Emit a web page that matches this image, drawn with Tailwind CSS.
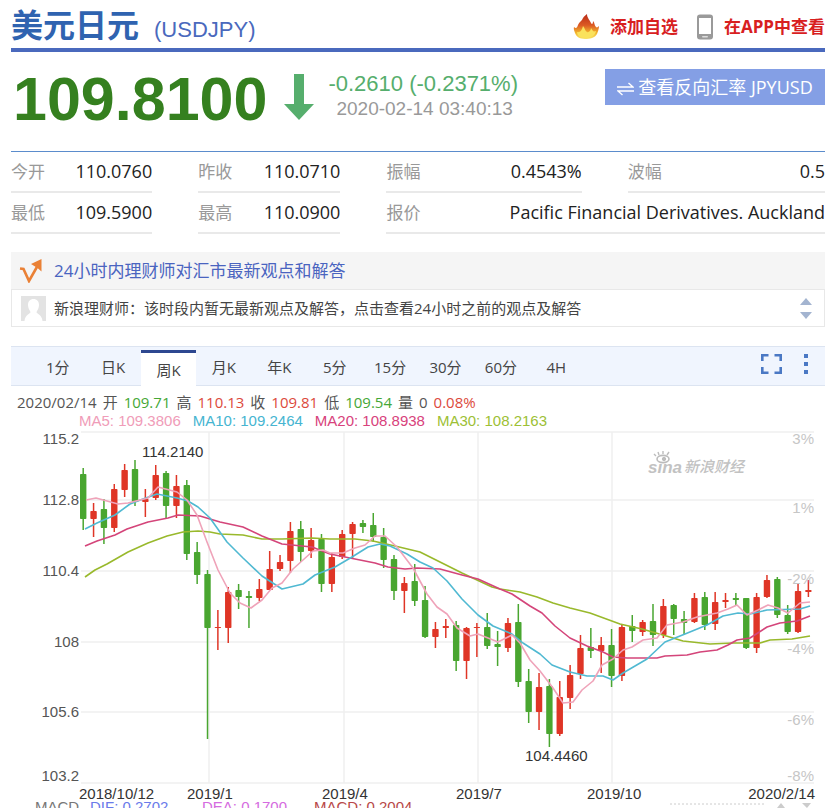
<!DOCTYPE html>
<html lang="zh-CN">

<head>
    <meta charset="UTF-8">
    <meta name="viewport" content="width=device-width, initial-scale=1.0">
    <title>美元日元 (USDJPY)</title>
    <script src="https://cdn.jsdelivr.net/npm/@tailwindcss/browser@4"></script>
</head>

<body class="bg-white font-['Open_Sans','Noto_Sans_CJK_SC',sans-serif] text-[#222]">
    <div class="pl-[11px] pr-[15px] overflow-hidden">

        <!-- title bar -->
        <header class="flex items-center justify-between h-[52px] border-b-4 border-[#4a69bd]">
            <h1 class="flex items-baseline gap-[15px] pt-[5px] text-[32px] leading-[43px] font-bold text-[#2f63b0]">美元日元
                <span class="font-['Liberation_Sans',sans-serif] text-[22px] font-normal text-[#4a69bd]">(USDJPY)</span>
            </h1>
            <nav class="flex items-center gap-[18px] pt-[6px] text-[17px] leading-[24px] font-bold text-[#d8201f]">
                <a href="#" class="flex items-center gap-[10px]">
                    <svg class="w-[27px] h-[26px]" viewBox="0 0 27 26">
                        <defs>
                            <linearGradient id="fire" x1="0" y1="0" x2="0" y2="1">
                                <stop offset="0" stop-color="#b92a18" />
                                <stop offset=".45" stop-color="#dc5a24" />
                                <stop offset=".75" stop-color="#f3b52c" />
                                <stop offset="1" stop-color="#f9e46a" />
                            </linearGradient>
                        </defs>
                        <path fill="url(#fire)"
                            d="M12 25C6 25 3 22 2 19C1 16 .5 15 1 13C3 15 4 14 5 11C6 8 9 7 10 4C11 2 13 1 14 0C14 4 17 6 18 9C19 11 20 10 20 7C22 9 21 11 23 13C24 14 25 13 26 12C26 15 25 17 24 20C22 24 17 25 12 25Z" />
                        <path fill="#fae25c"
                            d="M12 24C7 24 4 21 4 18C7 19 9 16 10 12C12 14 12 17 14 18C16 19 18 16 18 14C20 17 20 18 23 17C22 22 18 24 12 24Z" />
                    </svg>
                    添加自选
                </a>
                <a href="#" class="flex items-center gap-[10px]">
                    <svg class="w-[18px] h-[26px]" viewBox="0 0 18 26">
                        <rect x="1" y=".5" width="16" height="25" rx="3" fill="#9a9a9a" />
                        <rect x="3" y="4" width="12" height="16" fill="#fff" />
                        <rect x="6" y="22" width="6" height="1.6" rx=".8" fill="#ddd" />
                    </svg>
                    在APP中查看
                </a>
            </nav>
        </header>

        <!-- price -->
        <section class="flex items-start h-[99px] font-['Liberation_Sans',sans-serif]">
            <div class="pt-[12px] pl-[2px] text-[61px] leading-[70px] font-bold text-[#35801f]">109.8100</div>
            <svg class="w-[30px] h-[46px] mt-[22px] ml-[17px]" viewBox="0 0 30 46">
                <path fill="#56ae6d" d="M10 0H20V30H30L15 46L0 30H10Z" />
            </svg>
            <div class="pt-[19px] ml-[14px]">
                <div class="text-[22px] leading-[26px] text-[#56ae6d]">-0.2610 (-0.2371%)</div>
                <div class="pl-[8px] text-[19px] leading-[24px] text-[#999]">2020-02-14 03:40:13</div>
            </div>
            <button
                class="flex items-center justify-center gap-1 ml-auto mt-[17px] w-[220px] h-[36px] bg-[#849fe5] text-[18px] text-white font-['Open_Sans','Noto_Sans_CJK_SC',sans-serif] whitespace-nowrap">
                <svg class="w-[17px] h-[14px] mt-1" viewBox="0 0 17 14" fill="none" stroke="#fff" stroke-width="1.4">
                    <path d="M0 5H16L11.500 1M17 9H1L5.500 13" />
                </svg>
                查看反向汇率 JPYUSD
            </button>
        </section>

        <!-- quote details -->
        <dl
            class="grid grid-cols-[141fr_142fr_195fr_197fr] gap-x-[46px] border-t border-[#5b8ccc] [&_dt]:text-[17px] [&_dt]:text-[#999] [&_dd]:text-[18px] [&>div]:flex [&>div]:items-center [&>div]:justify-between [&>div]:h-[41px] [&>div]:border-b-2 [&>div]:border-[#e9e9e9] whitespace-nowrap">
            <div><dt>今开</dt><dd>110.0760</dd></div>
            <div><dt>昨收</dt><dd>110.0710</dd></div>
            <div><dt>振幅</dt><dd>0.4543%</dd></div>
            <div><dt>波幅</dt><dd>0.5</dd></div>
            <div><dt>最低</dt><dd>109.5900</dd></div>
            <div><dt>最高</dt><dd>110.0900</dd></div>
            <div class="col-span-2"><dt>报价</dt><dd>Pacific Financial Derivatives. Auckland</dd></div>
        </dl>

        <!-- adviser -->
        <section class="mt-[18px]">
            <h2 class="flex items-center gap-[11px] h-[37px] pl-[8px] bg-[#f5f5f5] text-[17px] text-[#4a64c0]">
                <svg class="w-[24px] h-[24px]" viewBox="0 0 24 24" fill="none">
                    <path stroke="#ea8136" stroke-width="2.6" d="M1 9.500L4.500 10L10 22L18.500 7" />
                    <path fill="#ea8136" d="M12 5L22.500 0V12.500L18.500 9Z" />
                </svg>
                <a href="#">24小时内理财师对汇市最新观点和解答</a>
            </h2>
            <div class="flex items-center gap-[8px] h-[38px] pl-[9px] pr-[12px] border border-[#e8e8e8] text-[15px] text-[#444]">
                <svg class="w-[25px] h-[25px]" viewBox="0 0 25 25">
                    <rect width="25" height="25" fill="#e3e3e3" />
                    <path fill="#fff"
                        d="M12.500 3C16 3 18 5.500 18 9C18 12 16.500 14 15.500 16C15.500 18 21 18.500 21.500 25H3.500C4 18.500 9.500 18 9.500 16C8.500 14 7 12 7 9C7 5.500 9 3 12.500 3Z" />
                </svg>
                <a href="#">新浪理财师：该时段内暂无最新观点及解答，点击查看24小时之前的观点及解答</a>
                <div class="flex flex-col gap-[7px] ml-auto">
                    <button aria-label="上一条"><svg class="block w-[12px] h-[7px]" viewBox="0 0 12 7"><path fill="#a3b4d0" d="M0 7L6 0L12 7Z" /></svg></button>
                    <button aria-label="下一条"><svg class="block w-[12px] h-[7px]" viewBox="0 0 12 7"><path fill="#a3b4d0" d="M0 0L6 7L12 0Z" /></svg></button>
                </div>
            </div>
        </section>

        <!-- period tabs -->
        <div class="flex mt-[19px] h-[40px] pl-[19px] bg-[#f0f5fe] border-y border-[#dce4f1] text-[15px] text-[#444]">
            <div class="grid grid-cols-10 w-[554px] [&>button]:pt-[2px]">
                <button>1分</button>
                <button>日K</button>
                <button class="mt-[3px] h-[36px] bg-white border-t-3 border-[#2d4790]">周K</button>
                <button>月K</button>
                <button>年K</button>
                <button>5分</button>
                <button>15分</button>
                <button>30分</button>
                <button>60分</button>
                <button>4H</button>
            </div>
            <div class="flex gap-[22px] ml-auto pr-[17px] pt-[7px]">
                <button class="self-start" aria-label="全屏">
                    <svg class="block w-[21px] h-[20px]" viewBox="0 0 21 20" fill="none" stroke="#4a78c4" stroke-width="2.6">
                        <path d="M1.300 7V1.300H7.500M13.500 1.300H19.700V7M19.700 13V18.700H13.500M7.500 18.700H1.300V13" />
                    </svg>
                </button>
                <button class="self-start" aria-label="更多">
                    <svg class="block w-[4px] h-[20px]" viewBox="0 0 4 20" fill="#4a78c4">
                        <path d="M0 0H4V4H0ZM0 8H4V12H0ZM0 16H4V20H0Z" />
                    </svg>
                </button>
            </div>
        </div>

        <div class="flex gap-[6px] pt-[6px] pl-[6px] text-[15px] leading-[20px] text-[#555] whitespace-nowrap">
            <span>2020/02/14</span>
            <span>开</span><span class="text-[#45a736]">109.71</span>
            <span>高</span><span class="text-[#dc4a3c]">110.13</span>
            <span>收</span><span class="text-[#dc4a3c]">109.81</span>
            <span>低</span><span class="text-[#45a736]">109.54</span>
            <span>量</span><span>0</span><span class="text-[#dc4a3c]">0.08%</span>
        </div>
        <div class="flex gap-[12px] pl-[68px] h-[18px] font-['Liberation_Sans',sans-serif] text-[15px] leading-[18px] whitespace-nowrap">
            <span class="text-[#f09cb8]">MA5: 109.3806</span>
            <span class="text-[#46b5d1]">MA10: 109.2464</span>
            <span class="text-[#d8427c]">MA20: 108.8938</span>
            <span class="text-[#9dbf35]">MA30: 108.2163</span>
        </div>

        <svg id="chart" class="block w-full font-['Liberation_Sans',sans-serif] text-[15px]" viewBox="11 430 814 378">
            <g id="grid" stroke="#efefef" stroke-width="1.5"></g>
            <g fill="#c2c2c2">
                <text x="648" y="473" class="text-[17px] font-bold italic">sina</text>
                <text x="684" y="472" class="text-[15px] font-medium italic font-['Noto_Sans_CJK_SC',sans-serif]">新浪财经</text>
                <g fill="none" stroke="#bcbcbc">
                    <ellipse cx="663" cy="459" rx="6" ry="3.6" fill="#fff" stroke-width="1.6" />
                    <circle cx="664" cy="459" r="1.7" fill="#bcbcbc" />
                    <path d="M656 456L654 454M659 455L658 452M663 454V451M667 455L669 452" stroke-width="1.4" />
                </g>
            </g>
            <g id="candles"></g>
            <g id="averages" fill="none" stroke-width="1.6" stroke-linejoin="round"></g>
            <g fill="#555" text-anchor="end">
                <text x="79" y="444">115.2</text>
                <text x="79" y="505">112.8</text>
                <text x="79" y="576">110.4</text>
                <text x="79" y="647">108</text>
                <text x="79" y="717">105.6</text>
                <text x="79" y="781">103.2</text>
            </g>
            <g fill="#c6c6c6" text-anchor="end">
                <text x="814" y="444">3%</text>
                <text x="814" y="513">1%</text>
                <text x="814" y="584">-2%</text>
                <text x="814" y="654">-4%</text>
                <text x="814" y="725">-6%</text>
                <text x="814" y="781">-8%</text>
            </g>
            <g fill="#333">
                <text x="142" y="457">114.2140</text>
                <text x="525" y="761">104.4460</text>
                <text x="79" y="799">2018/10/12</text>
                <text x="187" y="799">2019/1</text>
                <text x="322" y="799">2019/4</text>
                <text x="456" y="799">2019/7</text>
                <text x="587" y="799">2019/10</text>
                <text x="815" y="799" text-anchor="end">2020/2/14</text>
            </g>
            <text x="35" y="812" fill="#777">MACD</text>
            <text x="90" y="812" fill="#6a7bea">DIF: 0.2702</text>
            <text x="202" y="812" fill="#d56be0">DEA: 0.1700</text>
            <text x="314" y="812" fill="#b84848">MACD: 0.2004</text>
            <path d="M670 804H766" stroke="#ccc" stroke-dasharray="2 2" />
            <path d="M777 808L781 803L785 808ZM802 803H811L807 808Z" fill="#ccc" />
        </svg>
    </div>

    <script>
        // high, body top, body bottom, low, 1 = up (red) / 0 = down (green)
        const candles = [
            [468, 474, 519, 530, 0], [503, 511, 519, 537, 1], [499, 509, 528, 544, 0], [484, 489, 528, 532, 1],
            [464, 470, 490, 497, 1], [460, 469, 502, 506, 0], [489, 499, 502, 517, 1], [465, 475, 498, 500, 1],
            [471, 473, 506, 518, 0], [475, 486, 506, 518, 1], [480, 485, 554, 560, 0], [542, 552, 575, 584, 0],
            [570, 574, 628, 739, 0], [610, 627, 628, 650, 1], [587, 592, 628, 643, 1], [584, 590, 597, 609, 0],
            [591, 596, 598, 628, 0], [579, 589, 598, 601, 1], [551, 569, 590, 590, 1], [555, 562, 569, 571, 1],
            [522, 531, 561, 573, 1], [521, 529, 552, 562, 0], [528, 540, 551, 558, 1], [534, 539, 584, 592, 0],
            [553, 557, 584, 592, 1], [530, 534, 557, 559, 1], [522, 524, 534, 558, 1], [520, 523, 527, 533, 0],
            [513, 525, 537, 542, 0], [528, 537, 560, 568, 0], [555, 559, 591, 600, 0], [577, 583, 591, 613, 1],
            [564, 581, 601, 606, 0], [586, 600, 637, 638, 0], [622, 629, 637, 648, 1], [619, 626, 628, 638, 1],
            [621, 625, 661, 671, 0], [627, 628, 661, 679, 1], [623, 627, 628, 657, 1], [613, 627, 646, 649, 0],
            [631, 644, 647, 666, 0], [618, 623, 648, 652, 1], [604, 622, 682, 687, 0], [669, 681, 712, 723, 0],
            [673, 687, 712, 730, 1], [679, 686, 734, 747, 0], [681, 697, 734, 736, 1], [665, 675, 698, 709, 1],
            [635, 648, 674, 679, 1], [628, 647, 651, 658, 0], [637, 645, 651, 673, 1], [629, 645, 676, 687, 0],
            [625, 627, 676, 681, 1], [615, 626, 631, 642, 0], [620, 622, 632, 636, 1], [604, 621, 635, 646, 0],
            [599, 606, 635, 638, 1], [604, 605, 619, 635, 0], [611, 619, 623, 634, 0], [593, 598, 622, 623, 1],
            [592, 597, 625, 630, 0], [592, 602, 624, 630, 1], [593, 600, 602, 608, 1], [593, 598, 600, 605, 0],
            [598, 598, 648, 649, 0], [593, 597, 648, 653, 1], [575, 580, 597, 598, 1], [577, 579, 615, 618, 0],
            [605, 615, 632, 634, 0], [583, 591, 632, 633, 1], [580, 590, 592, 597, 1]
        ];

        const averages = {
            '#99b92c': '85,577 95,570 107,564 128,552 148,543 167,536 183,532 198,531 210,532 220,534 243,535 262,539 282,539 312,538 330,539 355,539 373,541 395,546 420,552 440,562 462,573 492,587 500,589 520,592 537,597 553,603 570,608 590,613 620,624 642,629 663,635 683,641 710,644 733,643 760,643 770,640 792,639 810,636',
            '#d4457a': '85,546 97,541 115,535 127,529 148,522 168,518 178,515 200,516 220,522 243,527 262,536 282,544 312,547 330,554 355,559 375,563 388,567 405,569 417,568 440,569 462,575 478,579 500,589 512,594 530,606 542,613 555,626 570,638 587,646 603,652 613,657 627,658 657,658 665,656 687,655 700,652 717,650 728,645 737,640 750,638 767,627 780,623 797,621 810,616',
            '#50b9d2': '85,529 97,523 115,515 130,504 143,499 157,494 177,498 188,501 198,507 210,518 227,542 243,558 262,576 282,589 303,584 315,575 335,567 352,557 368,547 380,544 390,546 407,554 420,562 433,568 447,581 462,599 478,615 493,626 512,634 523,643 540,654 552,665 570,672 587,676 603,676 613,680 623,673 647,659 665,642 685,634 707,625 723,616 738,613 750,614 767,610 800,609 810,606',
            '#efa3b9': '86,500 96,498 107,501 118,504 128,503 148,498 158,487 177,492 187,500 197,515 207,542 218,570 230,593 240,603 251,608 262,600 272,588 282,583 293,569 313,551 323,550 330,553 343,553 355,548 365,545 375,536 385,536 397,547 413,568 427,594 437,607 447,614 457,628 470,636 478,634 498,642 512,635 520,643 530,660 540,671 553,688 563,703 573,702 582,690 593,681 602,665 613,659 623,650 632,647 643,640 657,638 667,625 683,622 697,617 717,613 728,609 737,605 747,615 758,610 768,605 778,608 788,613 800,603 810,602'
        };

        let grid = '';
        [432, 500, 571, 642, 712, 783].forEach(y => grid += `<path d="M81 ${y}H814"/>`);
        [209, 344, 478, 612].forEach(x => grid += `<path d="M${x} 432V783"/>`);
        document.getElementById('grid').innerHTML = grid;

        document.getElementById('candles').innerHTML = candles.map((c, i) => {
            const x = 83.2 + i * 10.36;
            const color = c[4] ? '#df3526' : '#49a630';
            return `<path d="M${x} ${c[0]}V${c[3]}" stroke="${color}" stroke-width="1.5"/>
                <rect x="${x - 3.2}" y="${c[1]}" width="6.4" height="${Math.max(c[2] - c[1], 1)}" rx=".8" fill="${color}"/>`;
        }).join('');

        document.getElementById('averages').innerHTML = Object.keys(averages).map(color =>
            `<polyline points="${averages[color]}" stroke="${color}"/>`).join('');
    </script>

</body>

</html>
